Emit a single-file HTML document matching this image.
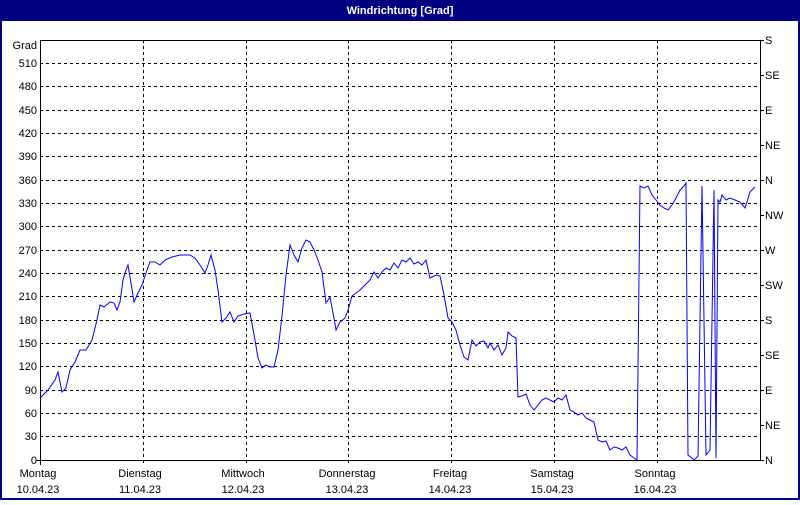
<!DOCTYPE html>
<html><head><meta charset="utf-8"><style>
html,body{margin:0;padding:0;background:#fff}
body{width:800px;height:500px;overflow:hidden;font-family:"Liberation Sans",sans-serif}
</style></head><body>
<svg width="800" height="500" xmlns="http://www.w3.org/2000/svg" font-family="Liberation Sans, sans-serif" font-size="11">
<rect x="0" y="0" width="800" height="500" fill="#000080"/>
<rect x="2" y="21" width="796" height="477" fill="#fff"/>
<text x="400" y="14" fill="#fff" font-weight="bold" text-anchor="middle">Windrichtung [Grad]</text>
<g stroke="#000" stroke-width="1" stroke-dasharray="3,3" shape-rendering="crispEdges">
<line x1="40" y1="63.5" x2="760" y2="63.5"/><line x1="40" y1="86.5" x2="760" y2="86.5"/>
<line x1="40" y1="110.5" x2="760" y2="110.5"/><line x1="40" y1="133.5" x2="760" y2="133.5"/>
<line x1="40" y1="156.5" x2="760" y2="156.5"/><line x1="40" y1="180.5" x2="760" y2="180.5"/>
<line x1="40" y1="203.5" x2="760" y2="203.5"/><line x1="40" y1="226.5" x2="760" y2="226.5"/>
<line x1="40" y1="250.5" x2="760" y2="250.5"/><line x1="40" y1="273.5" x2="760" y2="273.5"/>
<line x1="40" y1="296.5" x2="760" y2="296.5"/><line x1="40" y1="320.5" x2="760" y2="320.5"/>
<line x1="40" y1="343.5" x2="760" y2="343.5"/><line x1="40" y1="366.5" x2="760" y2="366.5"/>
<line x1="40" y1="390.5" x2="760" y2="390.5"/><line x1="40" y1="413.5" x2="760" y2="413.5"/>
<line x1="40" y1="436.5" x2="760" y2="436.5"/>
<line x1="143.5" y1="40" x2="143.5" y2="465"/><line x1="246.5" y1="40" x2="246.5" y2="465"/>
<line x1="348.5" y1="40" x2="348.5" y2="465"/><line x1="451.5" y1="40" x2="451.5" y2="465"/>
<line x1="554.5" y1="40" x2="554.5" y2="465"/><line x1="657.5" y1="40" x2="657.5" y2="465"/>
</g>
<g stroke="#000" stroke-width="1" shape-rendering="crispEdges" fill="none">
<line x1="40.5" y1="40" x2="40.5" y2="465"/>
<line x1="40" y1="40.5" x2="760" y2="40.5"/>
<line x1="36" y1="460.5" x2="760" y2="460.5"/>
<line x1="760.5" y1="40" x2="760.5" y2="461"/>
</g>
<g stroke="#000" shape-rendering="crispEdges">
<line x1="760" y1="40.5" x2="764" y2="40.5"/><line x1="760" y1="75.5" x2="764" y2="75.5"/><line x1="760" y1="110.5" x2="764" y2="110.5"/><line x1="760" y1="145.5" x2="764" y2="145.5"/><line x1="760" y1="180.5" x2="764" y2="180.5"/><line x1="760" y1="215.5" x2="764" y2="215.5"/><line x1="760" y1="250.5" x2="764" y2="250.5"/><line x1="760" y1="285.5" x2="764" y2="285.5"/><line x1="760" y1="320.5" x2="764" y2="320.5"/><line x1="760" y1="355.5" x2="764" y2="355.5"/><line x1="760" y1="390.5" x2="764" y2="390.5"/><line x1="760" y1="425.5" x2="764" y2="425.5"/><line x1="760" y1="460.5" x2="764" y2="460.5"/>
</g>
<g text-anchor="end" fill="#000">
<text x="37" y="49">Grad</text>
<text x="37" y="67">510</text><text x="37" y="90">480</text><text x="37" y="114">450</text><text x="37" y="137">420</text><text x="37" y="160">390</text><text x="37" y="184">360</text><text x="37" y="207">330</text><text x="37" y="230">300</text><text x="37" y="254">270</text><text x="37" y="277">240</text><text x="37" y="300">210</text><text x="37" y="324">180</text><text x="37" y="347">150</text><text x="37" y="370">120</text><text x="37" y="394">90</text><text x="37" y="417">60</text><text x="37" y="440">30</text><text x="37" y="464">0</text>
</g>
<g fill="#000">
<text x="765" y="44">S</text><text x="765" y="79">SE</text><text x="765" y="114">E</text><text x="765" y="149">NE</text><text x="765" y="184">N</text><text x="765" y="219">NW</text><text x="765" y="254">W</text><text x="765" y="289">SW</text><text x="765" y="324">S</text><text x="765" y="359">SE</text><text x="765" y="394">E</text><text x="765" y="429">NE</text><text x="765" y="464">N</text>
</g>
<g text-anchor="middle" fill="#000">
<text x="38" y="477">Montag</text><text x="38" y="493">10.04.23</text>
<text x="140" y="477">Dienstag</text><text x="140" y="493">11.04.23</text>
<text x="243" y="477">Mittwoch</text><text x="243" y="493">12.04.23</text>
<text x="347" y="477">Donnerstag</text><text x="347" y="493">13.04.23</text>
<text x="450" y="477">Freitag</text><text x="450" y="493">14.04.23</text>
<text x="552" y="477">Samstag</text><text x="552" y="493">15.04.23</text>
<text x="655" y="477">Sonntag</text><text x="655" y="493">16.04.23</text>
</g>
<polyline fill="none" stroke="#0000ff" stroke-width="1" points="40,398 48,390 55,380 58,372 62,392 66,388 70,370 75,362 80,350 86,350 92,340 97,320 100,305 104,307 110,302 114,303 117,310 120,302 123,280 126,270 128,265 131,283 134,302 138,293 142,285 147,270 150,262 155,262 160,265 165,260 172,257 180,255 190,255 195,258 200,265 205,273 208,265 211,255 215,270 218,290 222,322 226,318 230,312 234,322 238,316 244,314 250,313 255,340 258,358 262,368 266,365 270,367 274,367 278,350 282,316 286,275 290,245 294,255 298,262 302,248 306,240 310,242 314,250 318,260 322,272 326,303 330,297 334,318 336,330 340,322 345,318 348,310 352,296 356,293 360,290 365,285 370,280 374,272 378,278 382,272 386,268 390,270 394,263 398,268 402,260 406,262 410,258 414,264 418,262 422,265 426,260 430,278 436,275 440,276 444,295 448,318 452,322 456,330 460,345 464,357 468,360 472,340 476,346 480,342 484,341 488,348 490,343 494,350 498,345 502,355 506,348 508,332 512,336 516,338 518,397 522,396 526,394 530,405 534,410 538,405 542,400 546,398 550,400 554,402 558,398 562,400 566,395 570,410 574,412 578,415 582,413 586,418 590,420 594,422 598,440 602,442 606,441 610,450 614,447 618,448 622,450 626,447 630,455 634,458 637,460 640,186 644,188 648,186 652,195 656,200 660,205 664,208 668,210 672,205 676,198 680,190 684,186 686,183 688,455 694,460 698,456 702,186 706,455 710,450 714,190 716,458 718,200 720,202 722,195 726,200 730,198 735,200 740,202 745,208 750,192 755,187"/>
</svg>
</body></html>
